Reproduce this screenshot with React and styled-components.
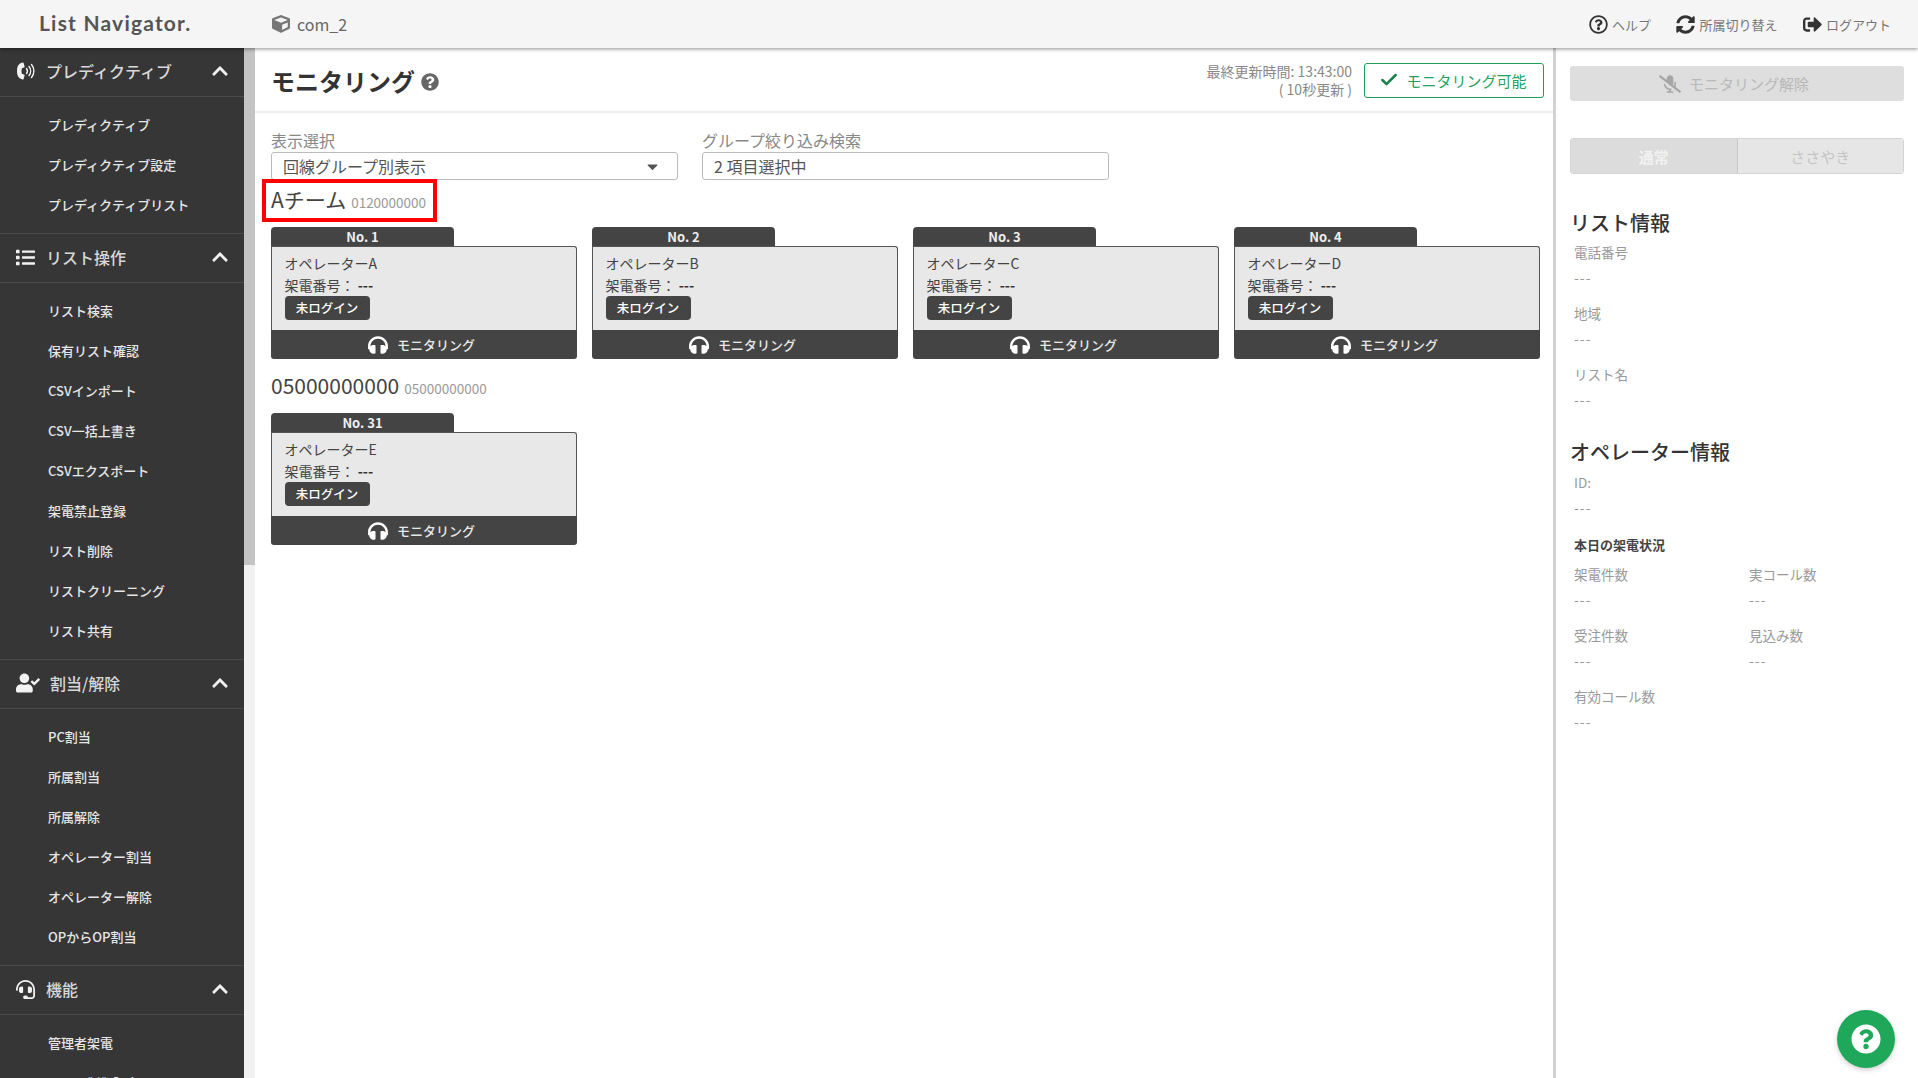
import React from 'react';
import styled, { createGlobalStyle } from 'styled-components';
import {
  FaList, FaUserCheck, FaHeadset, FaHeadphones, FaMicrophoneSlash,
  FaSyncAlt, FaSignOutAlt, FaRegQuestionCircle, FaQuestionCircle, FaChevronUp, FaCube, FaCaretDown,
} from 'react-icons/fa';
import { FiCheck } from 'react-icons/fi';

const FONT = `"Noto Sans CJK JP", "Noto Sans", sans-serif`;

const Global = createGlobalStyle`
  html, body { margin: 0; padding: 0; height: 100%; overflow: hidden; background: #fff; }
  body { font-family: ${FONT}; color: #333; }
  * { box-sizing: border-box; }
`;

const Page = styled.div`
  width: 1918px; height: 1078px; display: flex; flex-direction: column; overflow: hidden; position: relative;
`;
const Header = styled.header`
  height: 48px; flex: none; background: #f5f5f5; display: flex; align-items: center;
  box-shadow: 0 1px 4px rgba(0,0,0,.45); position: relative; z-index: 2; padding-right: 27px;
`;
const Logo = styled.div`
  width: 272px; padding-left: 39px; font-family: "Lato", sans-serif; font-size: 21px; font-weight: 700;
  color: #555; letter-spacing: 1.2px; white-space: nowrap; margin-top: -4px;
`;
const Company = styled.div`
  display: flex; align-items: center; gap: 7px; font-size: 16px; color: #666; flex: 1; line-height: 1;
  svg { color: #777; font-size: 18px; }
`;
const HeadLink = styled.div`
  display: flex; align-items: center; gap: 4px; font-size: 13px; color: #777; margin-left: 25.5px; line-height: 1;
  svg { color: #333; font-size: 19px; margin-top: 1px; }
`;
const Body = styled.div`
  flex: 1; display: flex; min-height: 0;
`;
const Side = styled.nav`
  width: 244px; flex: none; background: #363636; overflow: hidden;
`;
const SideHead = styled.div`
  height: 49px; display: flex; align-items: center; padding: 0 15px 2px 16px; color: #d8d8d8; font-size: 16px; font-weight: 500;
  border-bottom: 1px solid #4a4a4a;
`;
const SideIcon = styled.span`
  width: ${p => p.$w}px; flex: none; display: flex; align-items: center; color: #f2f2f2; font-size: ${p => p.$size}px;
`;
const SideTitle = styled.span`
  flex: 1; white-space: nowrap;
`;
const Chevron = styled.span`
  color: #f0f0f0; font-size: 18px; display: flex;
`;
const SideList = styled.ul`
  list-style: none; margin: 0; padding: 8px 0; border-bottom: 1px solid #4a4a4a;
`;
const SideItem = styled.li`
  height: 40px; display: flex; align-items: center; padding: 0 0 2px 48px; color: #e6e6e6; font-size: 13px; font-weight: 500; white-space: nowrap;
`;
const Track = styled.div`
  width: 11px; flex: none; background: #f1f1f1;
`;
const Thumb = styled.div`
  width: 11px; height: 517px; background: #c4c4c4;
`;
const Main = styled.main`
  width: 1301px; flex: none; border-right: 3px solid #d2d2d2;
`;
const TitleBar = styled.div`
  height: 65px; display: flex; align-items: center; padding: 0 9px 0 16px; border-bottom: 2px solid #eee;
`;
const Title = styled.h1`
  margin: 2px 0 0; font-size: 24px; font-weight: 700; color: #333; line-height: 1; white-space: nowrap;
`;
const TitleHelp = styled.span`
  color: #666; font-size: 18px; display: flex; margin: 4px 0 0 6px; flex: 1;
`;
const Updated = styled.div`
  font-size: 14px; color: #888; text-align: right; line-height: 18px; margin-right: 12px; font-weight: 400; white-space: nowrap;
`;
const StatusBtn = styled.div`
  width: 180px; height: 35px; border: 1px solid #1e9e55; border-radius: 3px; display: flex; align-items: center; justify-content: center; gap: 7px;
  color: #23a25c; font-size: 15px; font-weight: 400; margin-top: 1px; padding-right: 2px; white-space: nowrap;
  svg { color: #198247; font-size: 20px; stroke-width: 3; }
`;
const Content = styled.div`
  padding: 16px 14px 0 16px; position: relative;
`;
const Filters = styled.div`
  display: flex; gap: 24px;
`;
const Filter = styled.div`
  width: 407px;
`;
const FilterLabel = styled.div`
  font-size: 16px; color: #888; line-height: 22px; height: 23px;
`;
const FilterBox = styled.div`
  height: 28px; border: 1px solid #bbb; border-radius: 3px; display: flex; align-items: center; justify-content: space-between; padding: 0 16px 0 11px;
  font-size: 16px; color: #555; line-height: 1;
  svg { color: #555; font-size: 17px; }
`;
const GroupHead = styled.div`
  display: flex; align-items: baseline; gap: 5px; color: #444; font-size: 21px; height: ${p => p.$h}px; line-height: ${p => p.$lh}px; white-space: nowrap;
`;
const GroupSub = styled.span`
  font-size: 13.5px; color: #999;
`;
const RedMark = styled.div`
  position: absolute; left: 7px; top: 66px; width: 175px; height: 43px; border: 4px solid #f00; pointer-events: none;
`;
const Cards = styled.div`
  display: grid; grid-template-columns: repeat(4, 306px); column-gap: 15px;
`;
const Card = styled.div`
  display: flex; flex-direction: column; height: 132px;
`;
const Tab = styled.div`
  width: 183px; height: 19px; background: #444; border-radius: 4px 4px 0 0; flex: none; color: #eee;
  font-size: 13px; font-weight: 700; text-align: center; line-height: 20px;
`;
const CardBody = styled.div`
  flex: 1; background: #e8e8e8; border: 1px solid #555; border-bottom: none; border-radius: 0 3px 0 0; padding: 4.5px 12.5px 0;
`;
const OpName = styled.div`
  font-size: 14px; color: #444; line-height: 22px; height: 22px; white-space: nowrap;
`;
const OpNumber = styled.div`
  font-size: 14px; color: #444; line-height: 22px; height: 22px; white-space: nowrap; b { font-weight: 700; color: #333; }
`;
const Badge = styled.div`
  width: 85px; height: 24px; background: #444; color: #fff; border-radius: 4px; font-size: 12.5px; font-weight: 500;
  display: flex; align-items: center; justify-content: center;
`;
const CardFoot = styled.div`
  height: 29px; flex: none; background: #444; border-radius: 0 0 3px 3px; color: #e8e8e8; display: flex; align-items: center; justify-content: center; gap: 9px;
  font-size: 13px; font-weight: 500; padding-right: 5px;
  svg { font-size: 20px; color: #fff; }
`;
const Right = styled.aside`
  flex: 1; padding: 18px 14px 0 14px; min-width: 0;
`;
const UnmuteBtn = styled.div`
  height: 35px; background: #dedede; border-radius: 3px; display: flex; align-items: center; justify-content: center; gap: 8px;
  color: #b8b8b8; font-size: 15px; font-weight: 400; padding-right: 6px;
  svg { color: #a6a6a6; font-size: 22px; }
`;
const Segments = styled.div`
  margin-top: 37px; height: 36px; display: flex; border: 1px solid #d4d4d4; border-radius: 3px; overflow: hidden;
`;
const Segment = styled.div`
  flex: 1; display: flex; align-items: center; justify-content: center; font-size: 15px; font-weight: ${p => p.$on ? 700 : 400};
  color: ${p => p.$on ? '#f2f2f2' : '#c4c4c4'}; background: ${p => p.$on ? '#dcdcdc' : '#e6e6e6'};
  & + & { border-left: 1px solid #c8c8c8; }
`;
const InfoTitle = styled.h2`
  margin: ${p => p.$mt}px 0 ${p => p.$mb}px; font-size: 20px; line-height: 28px; height: 28px; font-weight: 500; color: #333; white-space: nowrap;
`;
const Field = styled.div`
  padding-left: 4px; height: ${p => p.$h || 61}px;
`;
const FieldLabel = styled.div`
  font-size: 13.5px; color: #999; line-height: 20px; height: 20px; white-space: nowrap;
`;
const FieldValue = styled.div`
  font-size: 14px; letter-spacing: 1px; color: #999; line-height: 20px; height: 20px; margin-top: 5px;
`;
const SubHead = styled.div`
  padding-left: 4px; font-size: 13px; font-weight: 700; color: #444; line-height: 20px; height: 20px; margin-top: 13px; margin-bottom: 9px;
`;
const Stats = styled.div`
  display: grid; grid-template-columns: 175px 1fr;
`;
const Fab = styled.div`
  position: absolute; left: 1837px; top: 1010px; width: 58px; height: 58px; border-radius: 50%; background: #1fa85a; color: #fff;
  display: flex; align-items: center; justify-content: center; font-size: 30px; box-shadow: 0 2px 5px rgba(0,0,0,.2);
`;

const PhoneWaves = () => (
  <svg width="20" height="20" viewBox="0 0 20 20" fill="none">
    <path fill="currentColor" d="M6.5 1.5 L4 2.5 C1.5 4 1 7 1 10 C1 13 1.5 16 4 17.5 L6.5 18.5 C7 18.7 7.5 18.4 7.6 18 L8.6 14.5 C8.7 14 8.5 13.6 8 13.4 L5.8 12.8 C5.4 11 5.4 9 5.8 7.2 L8 6.6 C8.5 6.4 8.7 6 8.6 5.5 L7.6 2 C7.5 1.6 7 1.3 6.5 1.5Z" />
    <g stroke="currentColor" strokeWidth="1.4" strokeLinecap="round">
      <path d="M10.5 7.5 A4 4 0 0 1 10.5 12.5" />
      <path d="M13 5.5 A7 7 0 0 1 13 14.5" />
      <path d="M15.5 3.5 A10 10 0 0 1 15.5 16.5" />
    </g>
  </svg>
);

const sections = [
  { icon: <PhoneWaves />, w: 30, size: 20, title: 'プレディクティブ', items: ['プレディクティブ', 'プレディクティブ設定', 'プレディクティブリスト'] },
  { icon: <FaList />, w: 30, size: 19, title: 'リスト操作', items: ['リスト検索', '保有リスト確認', 'CSVインポート', 'CSV一括上書き', 'CSVエクスポート', '架電禁止登録', 'リスト削除', 'リストクリーニング', 'リスト共有'] },
  { icon: <FaUserCheck />, w: 34, size: 24, title: '割当/解除', items: ['PC割当', '所属割当', '所属解除', 'オペレーター割当', 'オペレーター解除', 'OPからOP割当'] },
  { icon: <FaHeadset />, w: 30, size: 19, title: '機能', items: ['管理者架電', 'コール制御設定'] },
];

const Operator = ({ no, name }) => (
  <Card>
    <Tab>No. {no}</Tab>
    <CardBody>
      <OpName>{name}</OpName>
      <OpNumber>架電番号： <b>---</b></OpNumber>
      <Badge>未ログイン</Badge>
    </CardBody>
    <CardFoot><FaHeadphones />モニタリング</CardFoot>
  </Card>
);

const Info = ({ label, h }) => (
  <Field $h={h}>
    <FieldLabel>{label}</FieldLabel>
    <FieldValue>---</FieldValue>
  </Field>
);

export default function App() {
  return (
    <Page>
      <Global />
      <Header>
        <Logo>List Navigator.</Logo>
        <Company><FaCube />com_2</Company>
        <HeadLink><FaRegQuestionCircle />ヘルプ</HeadLink>
        <HeadLink><FaSyncAlt />所属切り替え</HeadLink>
        <HeadLink><FaSignOutAlt />ログアウト</HeadLink>
      </Header>
      <Body>
        <Side>
          {sections.map(s => (
            <section key={s.title}>
              <SideHead>
                <SideIcon $w={s.w} $size={s.size}>{s.icon}</SideIcon>
                <SideTitle>{s.title}</SideTitle>
                <Chevron><FaChevronUp /></Chevron>
              </SideHead>
              <SideList>
                {s.items.map(i => <SideItem key={i}>{i}</SideItem>)}
              </SideList>
            </section>
          ))}
        </Side>
        <Track><Thumb /></Track>
        <Main>
          <TitleBar>
            <Title>モニタリング</Title>
            <TitleHelp><FaQuestionCircle /></TitleHelp>
            <Updated>最終更新時間: 13:43:00<br />( 10秒更新 )</Updated>
            <StatusBtn><FiCheck />モニタリング可能</StatusBtn>
          </TitleBar>
          <Content>
            <Filters>
              <Filter>
                <FilterLabel>表示選択</FilterLabel>
                <FilterBox>回線グループ別表示<FaCaretDown /></FilterBox>
              </Filter>
              <Filter>
                <FilterLabel>グループ絞り込み検索</FilterLabel>
                <FilterBox>2 項目選択中</FilterBox>
              </Filter>
            </Filters>
            <GroupHead $h={47} $lh={39}>Aチーム <GroupSub>0120000000</GroupSub></GroupHead>
            <RedMark />
            <Cards>
              <Operator no={1} name="オペレーターA" />
              <Operator no={2} name="オペレーターB" />
              <Operator no={3} name="オペレーターC" />
              <Operator no={4} name="オペレーターD" />
            </Cards>
            <GroupHead $h={54} $lh={52}>05000000000 <GroupSub>05000000000</GroupSub></GroupHead>
            <Cards>
              <Operator no={31} name="オペレーターE" />
            </Cards>
          </Content>
        </Main>
        <Right>
          <UnmuteBtn><FaMicrophoneSlash />モニタリング解除</UnmuteBtn>
          <Segments>
            <Segment $on>通常</Segment>
            <Segment>ささやき</Segment>
          </Segments>
          <InfoTitle $mt={35} $mb={5}>リスト情報</InfoTitle>
          <Info label="電話番号" />
          <Info label="地域" />
          <Info label="リスト名" />
          <InfoTitle $mt={13} $mb={6}>オペレーター情報</InfoTitle>
          <Info label="ID:" h={50} />
          <SubHead>本日の架電状況</SubHead>
          <Stats>
            <Info label="架電件数" />
            <Info label="実コール数" />
            <Info label="受注件数" />
            <Info label="見込み数" />
            <Info label="有効コール数" />
          </Stats>
        </Right>
      </Body>
      <Fab><FaQuestionCircle /></Fab>
    </Page>
  );
}
